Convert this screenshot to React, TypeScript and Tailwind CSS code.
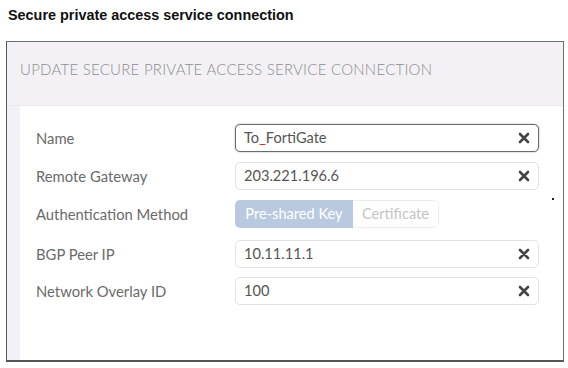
interface Field {
  label: string;
  value: string;
  focused?: boolean;
}

const ClearIcon = () => (
  <svg width="12" height="12" viewBox="0 0 12 12" className="shrink-0">
    <path d="M2 2 L10 10 M10 2 L2 10" stroke="#444" strokeWidth="2.6" strokeLinecap="round" />
  </svg>
);

const TextField = ({ value, focused }: { value: string; focused?: boolean }) => (
  <div
    className={`flex items-center justify-between w-[304px] h-[28px] pl-[8px] pr-[8px] rounded-[5px] bg-white border ${
      focused ? "border-[#6b6b6b] shadow-[0_0_2px_rgba(0,0,0,0.35)]" : "border-[#e2e2e2]"
    }`}
  >
    <span className="text-[14.6px] text-[#555]">
      {value === "To_FortiGate" ? (
        <>
          To<span className="text-[#c0392b]">_</span>FortiGate
        </>
      ) : (
        value
      )}
    </span>
    <ClearIcon />
  </div>
);

const Row = ({ label, children }: { label: string; children: React.ReactNode }) => (
  <div className="flex items-center h-[28px]">
    <div className="w-[199px] text-[14.8px] text-[#6a6a6a]">{label}</div>
    {children}
  </div>
);

export default function App() {
  const top: Field[] = [
    { label: "Name", value: "To_FortiGate", focused: true },
    { label: "Remote Gateway", value: "203.221.196.6" },
  ];
  const bottom: Field[] = [
    { label: "BGP Peer IP", value: "10.11.11.1" },
    { label: "Network Overlay ID", value: "100" },
  ];

  return (
    <div className="w-[568px] h-[368px] bg-white" style={{ fontFamily: "Lato, 'Open Sans', sans-serif" }}>
      <h1
        className="pl-[8px] pt-[6px] text-[14.4px] font-bold text-[#111] leading-[18px]"
        style={{ fontFamily: "'Liberation Sans', Arial, sans-serif" }}
      >
        Secure private access service connection
      </h1>
      <div className="ml-[6px] mt-[17px] w-[558px] h-[321px] flex flex-col bg-[#f3f1f5] border border-[#6f6f6f] border-l-[#555] border-b-[#555] border-b-2">
        <div className="h-[64px] pt-[16px] pl-[13px] text-[15px] font-light text-[#8e8e8e] tracking-[0.25px] border-b border-b-[#ebe9ee]">
          UPDATE SECURE PRIVATE ACCESS SERVICE CONNECTION
        </div>
        <div className="relative flex-1 ml-[13px] bg-white pt-[18px] pl-[16px] flex flex-col gap-[10px]">
          {top.map((f) => (
            <Row key={f.label} label={f.label}>
              <TextField value={f.value} focused={f.focused} />
            </Row>
          ))}
          <Row label="Authentication Method">
            <div className="flex h-[28px] rounded-[5px] overflow-hidden text-[14.6px]">
              <div className="w-[118px] flex items-center justify-center bg-[#b9c9e0] text-white">
                Pre-shared Key
              </div>
              <div className="w-[86px] flex items-center justify-center bg-white text-[#c4c4c4] border border-l-0 border-[#ececec] rounded-r-[5px]">
                Certificate
              </div>
            </div>
          </Row>
          <div className="flex flex-col gap-[9px] mt-[2px]">
            {bottom.map((f) => (
              <Row key={f.label} label={f.label}>
                <TextField value={f.value} />
              </Row>
            ))}
          </div>
          <div className="absolute left-[532px] top-[92px] w-[2px] h-[2px] bg-[#222]" />
        </div>
      </div>
    </div>
  );
}
